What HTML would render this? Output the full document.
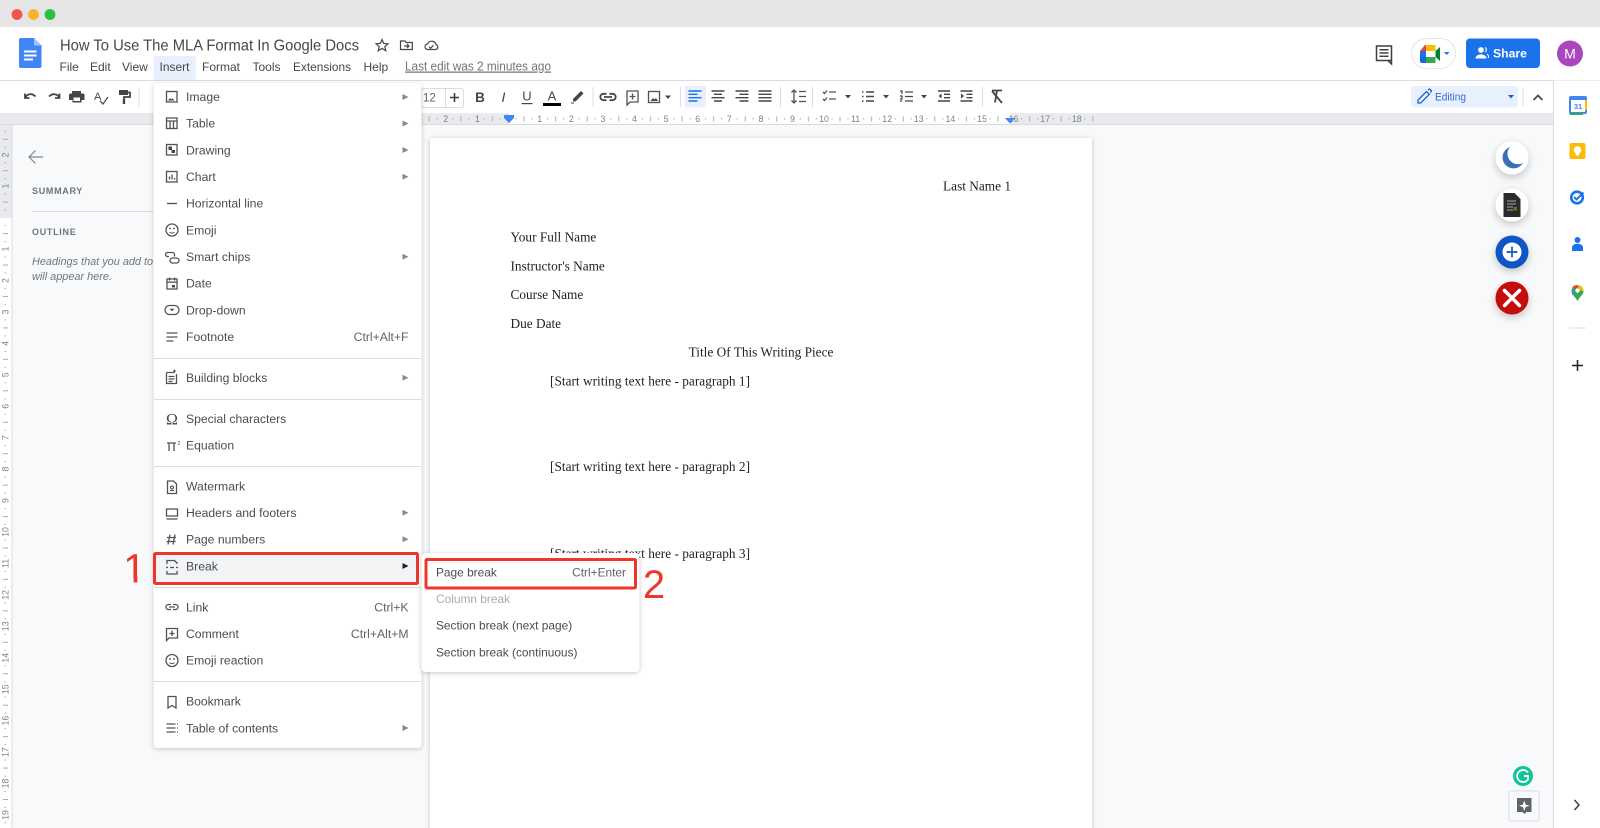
<!DOCTYPE html>
<html lang="en"><head><meta charset="utf-8"><title>How To Use The MLA Format In Google Docs</title>
<style>
html,body{margin:0;padding:0;width:1600px;height:828px;overflow:hidden;background:#fff}
svg{display:block;font-family:"Liberation Sans",Arial,sans-serif;filter:blur(.3px)}
.m{font-size:12.2px;fill:#4a4d50}
.mb{font-size:12px;fill:#444746}
.d{font-family:"Liberation Serif","Times New Roman",serif;font-size:13.3px;fill:#222}
.r{font-size:8.8px;fill:#7d8185}
.i{fill:none;stroke:#505356;stroke-width:1.3}
.t{fill:none;stroke:#444746;stroke-width:1.8}
.s{stroke:#dadce0;stroke-width:1}
.a{fill:#8a8a8a}
</style></head><body>
<svg width="1600" height="828" viewBox="0 0 1600 828" xmlns="http://www.w3.org/2000/svg">
<defs>
<filter id="sh" x="-10%" y="-10%" width="120%" height="120%"><feDropShadow dx="0" dy="1" stdDeviation="2.5" flood-color="#000" flood-opacity=".22"/></filter>
<filter id="sc" x="-40%" y="-40%" width="180%" height="180%"><feDropShadow dx="0" dy="3" stdDeviation="4" flood-color="#000" flood-opacity=".22"/></filter>
<pattern id="hr" x="508" y="113" width="31.6" height="11" patternUnits="userSpaceOnUse">
<rect x="7.5" y="5" width="1" height="1.5" fill="#a8adb2"/><rect x="15.5" y="3.500" width="1" height="5" fill="#a8adb2"/><rect x="23.5" y="5" width="1" height="1.5" fill="#a8adb2"/>
</pattern>
<pattern id="vr" x="0" y="217.6" width="11" height="31.44" patternUnits="userSpaceOnUse">
<rect x="4.5" y="7.5" width="1.5" height="1" fill="#a8adb2"/><rect x="3" y="15.5" width="5" height="1" fill="#a8adb2"/><rect x="4.5" y="23.5" width="1.5" height="1" fill="#a8adb2"/>
</pattern>
<clipPath id="one"><rect x="110" y="540" width="40" height="38"/></clipPath>
</defs>

<!-- window -->
<rect width="1600" height="828" fill="#f8f9fa"/>
<rect width="1600" height="27" fill="#e5e5e5"/>
<circle cx="17" cy="14.5" r="5.4" fill="#f2544d"/><circle cx="33.5" cy="14.5" r="5.4" fill="#fbb32d"/><circle cx="50" cy="14.5" r="5.4" fill="#27c23f"/>
<rect y="27" width="1600" height="86" fill="#fff"/>
<rect y="80" width="1600" height="1" fill="#dadce0"/>

<!-- docs logo -->
<path d="M21 38h13l7.500 7.500V66a2 2 0 0 1-2 2H21a2 2 0 0 1-2-2V40a2 2 0 0 1 2-2z" fill="#4285f4"/>
<path d="M34 38v7.500h7.500z" fill="#a1c2fa"/>
<path d="M24 51.500h12.500M24 55.500h12.500M24 59.500h9" stroke="#fff" stroke-width="1.900" fill="none"/>

<!-- title -->
<text x="60" y="50.500" font-size="15.900" fill="#45484b" textLength="299" lengthAdjust="spacingAndGlyphs">How To Use The MLA Format In Google Docs</text>
<path d="M382 39.500l1.700 3.900 4.300.4-3.200 2.800 1 4.200-3.800-2.300-3.800 2.300 1-4.200-3.200-2.800 4.300-.4z" fill="none" stroke="#444746" stroke-width="1.200"/>
<path d="M400.500 41h4.500l1.300 1.500h6v7h-11.800z M404 46h5M407 44l2 2-2 2" fill="none" stroke="#444746" stroke-width="1.200"/>
<path d="M428 49.500a2.800 2.800 0 0 1-.4-5.600 4.500 4.500 0 0 1 8.500.8 2.500 2.500 0 0 1-.2 4.800z M429 46.800l1.500 1.500 3-3" fill="none" stroke="#444746" stroke-width="1.200"/>

<!-- menu bar -->
<rect x="153.500" y="56" width="42.500" height="24" rx="3" fill="#e8f0fe"/>
<text class="mb" x="59.500" y="71">File</text>
<text class="mb" x="90" y="71">Edit</text>
<text class="mb" x="122" y="71">View</text>
<text class="mb" x="159.500" y="71">Insert</text>
<text class="mb" x="202" y="71">Format</text>
<text class="mb" x="252.500" y="71">Tools</text>
<text class="mb" x="293" y="71" textLength="58" lengthAdjust="spacingAndGlyphs">Extensions</text>
<text class="mb" x="363.500" y="71">Help</text>
<text x="405" y="70.500" font-size="12.500" fill="#70757a" text-decoration="underline" textLength="146" lengthAdjust="spacingAndGlyphs">Last edit was 2 minutes ago</text>

<!-- top right -->
<path d="M1376.500 46h15v14.500h-15z M1388 60.500l3.500 3.500v-3.500 M1379.500 49.800h9M1379.500 53h9M1379.500 56.300h9" fill="none" stroke="#3c4043" stroke-width="1.500"/>
<rect x="1411.500" y="38.500" width="44" height="30" rx="15" fill="#fff" stroke="#e3e5e8"/>
<path d="M1420 51h6v-6h-1z" fill="#ea4335"/><path d="M1426 45h9.500v6h-9.500z" fill="#fbbc04"/><path d="M1420 51h6v6h-6z" fill="#1a73e8"/>
<path d="M1420 57h6v6h-4a2 2 0 0 1-2-2z" fill="#1967d2"/><path d="M1426 57h9.500v6h-9.500z" fill="#34a853"/><path d="M1435.500 51v6l4.500 4V47z" fill="#00832d"/>
<path d="M1426 51h6v6h-6z" fill="#fff"/>
<path d="M1444 52h5.500l-2.750 3z" fill="#1a73e8"/>
<rect x="1466" y="38.500" width="74" height="29.500" rx="4" fill="#1a73e8"/>
<circle cx="1481" cy="50" r="2.900" fill="#fff"/><path d="M1475.500 58.500c0-5.500 11-5.500 11 0z" fill="#fff"/><path d="M1485 47.500a2.500 2.500 0 0 1 0 4.500M1487 54c1 .5 1.500 1.500 1.500 4" stroke="#fff" fill="none" stroke-width="1"/>
<text x="1493" y="57.500" font-size="12.200" font-weight="bold" fill="#fff">Share</text>
<circle cx="1570" cy="53.500" r="13" fill="#ab47bc"/>
<text x="1570" y="58.500" font-size="14" fill="#fff" text-anchor="middle">M</text>

<!-- toolbar icons -->
<path class="t" d="M25 98c2-4.500 7-5 10.500-1.500M25 93.500v4.500h4.500"/>
<path class="t" d="M59.500 98c-2-4.500-7-5-10.500-1.500M59.500 93.500v4.500H55"/>
<path d="M72 91h9v2.500h2a1.500 1.500 0 0 1 1.500 1.500v5H81.500v2.500h-9V100H69v-5a1.500 1.500 0 0 1 1.500-1.500H72z" fill="#444746"/><rect x="73.500" y="97.500" width="6.500" height="3.500" fill="#fff"/>
<text x="94" y="100" font-size="11" fill="#444746">A</text><path class="i" d="M100 101l3 3 5-7"/>
<path d="M119 90h9v5h-9z" fill="#444746"/><path class="t" d="M128 92.500h2v4.500h-6v5"/><rect x="122.800" y="99" width="2.400" height="5" fill="#444746"/>
<rect x="138.500" y="87" width="1" height="20" fill="#dadce0"/>

<rect x="421.500" y="88.500" width="42" height="19" rx="2" fill="#fff" stroke="#dadce0"/><rect x="445" y="88" width="1" height="20" fill="#dadce0"/>
<text x="423" y="101.500" font-size="11.500" fill="#5f6368">12</text>
<path d="M450 97.500h9M454.500 93v9" stroke="#3c4043" stroke-width="1.600"/>
<text x="480" y="102" font-size="13.500" font-weight="bold" fill="#444746" text-anchor="middle">B</text>
<text x="503.500" y="102" font-size="14" font-style="italic" fill="#444746" text-anchor="middle">I</text>
<text x="527" y="100.500" font-size="13" fill="#444746" text-anchor="middle">U</text><rect x="521.500" y="103" width="11" height="1.200" fill="#444746"/>
<text x="552" y="100.500" font-size="13" fill="#444746" text-anchor="middle">A</text><rect x="543" y="103" width="18" height="3" fill="#000"/>
<path d="M573 99l8-8 2.500 2.500-8 8H573z" fill="#444746"/><path d="M571 103h3" stroke="#444746"/>
<rect x="592.500" y="87" width="1" height="20" fill="#dadce0"/>
<path class="t" d="M606.500 93.800h-3a3.200 3.200 0 0 0 0 6.400h3M609.500 93.800h3a3.200 3.200 0 0 1 0 6.400h-3M604 97h8"/>
<path class="i" d="M627 91h11v11h-8l-3 3zM632.500 93.500v6M629.500 96.500h6"/>
<rect x="648.500" y="91.500" width="11" height="11" class="i"/><path d="M650.500 101l2.500-3 1.500 1.500 1.500-1.500 2 3z" fill="#444746"/>
<path d="M665 95.500h6l-3 3.500z" fill="#444746"/>
<rect x="680" y="87" width="1" height="20" fill="#dadce0"/>
<rect x="684.500" y="86" width="21.500" height="21.500" rx="2" fill="#e8f0fe"/>
<path d="M688.500 91h13M688.500 94.300h9M688.500 97.700h13M688.500 101h9" stroke="#1a73e8" stroke-width="1.400"/>
<path d="M711.500 91h13M714 94.300h8M711.500 97.700h13M714 101h8" stroke="#444746" stroke-width="1.400"/>
<path d="M735.500 91h13M739.500 94.300h9M735.500 97.700h13M739.500 101h9" stroke="#444746" stroke-width="1.400"/>
<path d="M758.500 91h13M758.500 94.300h13M758.500 97.700h13M758.500 101h13" stroke="#444746" stroke-width="1.400"/>
<rect x="780" y="87" width="1" height="20" fill="#dadce0"/>
<path class="i" d="M794 90v13M791.500 92.500l2.500-2.500 2.500 2.500M791.500 100.500l2.500 2.500 2.500-2.500M799 91.500h7M799 96.500h7M799 101.500h7"/>
<rect x="812" y="87" width="1" height="20" fill="#dadce0"/>
<path class="i" d="M823 92l1.500 1.500 2.500-3M823 99l1.500 1.500 2.500-3M829 92h7M829 99h7"/>
<path d="M845 95h6l-3 3.500z" fill="#444746"/>
<path d="M862 92h1.500M862 96.500h1.500M862 101h1.500M866 92h8M866 96.500h8M866 101h8" stroke="#444746" stroke-width="1.500"/>
<path d="M883 95h6l-3 3.500z" fill="#444746"/>
<path d="M900 91h2v3M900 96h2v3h-2M900 101h2M905 92h8M905 96.500h8M905 101h8" stroke="#444746" stroke-width="1.200" fill="none"/>
<path d="M921 95h6l-3 3.500z" fill="#444746"/>
<path d="M938 91h12M944 94.300h6M944 97.700h6M938 101h12" stroke="#444746" stroke-width="1.400"/><path d="M941.500 93.500l-3 2.500 3 2.500z" fill="#444746"/>
<path d="M960.500 91h12M966.500 94.300h6M966.500 97.700h6M960.500 101h12" stroke="#444746" stroke-width="1.400"/><path d="M961 93.500l3 2.500-3 2.500z" fill="#444746"/>
<rect x="982" y="87" width="1" height="20" fill="#dadce0"/>
<path class="t" d="M992 90.500h10M997 90.500l-2 12M992 91l10 12"/>

<!-- editing -->
<rect x="1411" y="86" width="107" height="21.500" rx="3" fill="#e8f0fe"/>
<path d="M1418 103v-3l8.500-8.500 2.800 2.800L1420.800 103zM1428 90l1.500-1 2 2-1 1.500" fill="none" stroke="#1a5fd0" stroke-width="1.300"/>
<text x="1435" y="100.500" font-size="11" fill="#3367d6" textLength="31" lengthAdjust="spacingAndGlyphs">Editing</text>
<path d="M1508 95h6l-3 3.500z" fill="#1a5fd0"/>
<rect x="1522.500" y="87" width="1" height="19" fill="#dadce0"/>
<path d="M1533.500 100l4.500-4.500 4.500 4.500" fill="none" stroke="#444746" stroke-width="1.700"/>

<!-- right panel -->
<rect x="1553.500" y="80.500" width="46.500" height="748" fill="#fff"/>
<rect x="1553" y="81" width="1" height="747" fill="#dadce0"/>
<rect x="1570" y="97" width="16" height="16" rx="1" fill="#fff" stroke="#4285f4" stroke-width="2"/>
<path d="M1570 97h16v3h-16z" fill="#4285f4"/><path d="M1569 113h14v2h-13z" fill="#34a853"/><path d="M1585 100h2v10h-2z" fill="#fbbc04"/>
<text x="1578" y="109" font-size="7.500" font-weight="bold" fill="#4285f4" text-anchor="middle">31</text>
<rect x="1569.500" y="143" width="16" height="16" rx="2" fill="#fbbc04"/>
<circle cx="1577.500" cy="150" r="3.800" fill="#fff"/><rect x="1575.700" y="153.500" width="3.600" height="2" fill="#fff"/>
<circle cx="1577" cy="197.500" r="5.800" fill="none" stroke="#1a73e8" stroke-width="2.600"/><path d="M1574 197l2.500 2.500 7-7" fill="none" stroke="#1a73e8" stroke-width="2"/>
<circle cx="1577.500" cy="240" r="3" fill="#1a73e8"/><path d="M1572 251v-3.500c0-5 11-5 11 0v3.500z" fill="#1a73e8"/>
<path d="M1577.500 285a6 6 0 0 1 6 6c0 3.500-4 6-6 10-2-4-6-6.500-6-10a6 6 0 0 1 6-6z" fill="#34a853"/>
<path d="M1572 288a6 6 0 0 1 5.500-3v4z" fill="#ea4335"/><path d="M1577.500 285a6 6 0 0 1 6 6l-4-1z" fill="#fbbc04"/><path d="M1571.500 291l4 1-3 3.500z" fill="#4285f4"/>
<circle cx="1577.500" cy="290.500" r="2.200" fill="#fff"/>
<rect x="1569" y="327.500" width="17" height="1" fill="#dadce0"/>
<path d="M1572 365.500h11M1577.500 360v11" stroke="#202124" stroke-width="1.500"/>
<path d="M1574.500 800l4.500 5-4.500 5" fill="none" stroke="#444746" stroke-width="1.600"/>

<!-- horizontal ruler -->
<rect x="0" y="113" width="1553" height="11" fill="#e8eaed"/>
<rect x="509" y="113" width="501" height="11" fill="#fff"/>
<rect x="0" y="124" width="1553" height="1" fill="#dadce0"/>
<rect x="421" y="113" width="678" height="11" fill="url(#hr)"/>
<g class="r" text-anchor="middle">
<text x="445.700" y="122">2</text><text x="477.500" y="122">1</text>
<text x="539.700" y="122">1</text><text x="571.300" y="122">2</text><text x="602.900" y="122">3</text><text x="634.500" y="122">4</text><text x="666.100" y="122">5</text><text x="697.700" y="122">6</text><text x="729.300" y="122">7</text><text x="760.900" y="122">8</text><text x="792.500" y="122">9</text><text x="824" y="122">10</text><text x="855.600" y="122">11</text><text x="887.200" y="122">12</text><text x="918.800" y="122">13</text><text x="950.400" y="122">14</text><text x="982" y="122">15</text><text x="1013.600" y="122">16</text><text x="1045.200" y="122">17</text><text x="1076.800" y="122">18</text>
</g>
<path d="M504 115h10v3h-10zM504 118h10l-5 5z" fill="#4285f4"/>
<path d="M1005 118h10l-5 5.500z" fill="#4285f4"/>

<!-- vertical ruler -->
<rect x="0" y="125" width="11.500" height="703" fill="#fff"/>
<rect x="0" y="125" width="11.500" height="93" fill="#e8eaed"/>
<rect x="11.500" y="125" width="1" height="703" fill="#dadce0"/>
<rect x="0" y="125" width="11" height="703" fill="url(#vr)"/>
<g class="r" text-anchor="middle">
<text transform="translate(8.500 155) rotate(-90)">2</text><text transform="translate(8.500 186) rotate(-90)">1</text>
<text transform="translate(8.500 249) rotate(-90)">1</text><text transform="translate(8.500 280.500) rotate(-90)">2</text><text transform="translate(8.500 312) rotate(-90)">3</text><text transform="translate(8.500 343.400) rotate(-90)">4</text><text transform="translate(8.500 374.800) rotate(-90)">5</text><text transform="translate(8.500 406.300) rotate(-90)">6</text><text transform="translate(8.500 437.700) rotate(-90)">7</text><text transform="translate(8.500 469.100) rotate(-90)">8</text><text transform="translate(8.500 500.600) rotate(-90)">9</text><text transform="translate(8.500 532) rotate(-90)">10</text><text transform="translate(8.500 563.400) rotate(-90)">11</text><text transform="translate(8.500 594.900) rotate(-90)">12</text><text transform="translate(8.500 626.300) rotate(-90)">13</text><text transform="translate(8.500 657.800) rotate(-90)">14</text><text transform="translate(8.500 689.200) rotate(-90)">15</text><text transform="translate(8.500 720.600) rotate(-90)">16</text><text transform="translate(8.500 752.100) rotate(-90)">17</text><text transform="translate(8.500 783.500) rotate(-90)">18</text><text transform="translate(8.500 815) rotate(-90)">19</text>
</g>

<!-- sidebar -->
<path d="M29 157h14M35.500 150.500L29 157l6.500 6.500" fill="none" stroke="#80868b" stroke-width="1.200"/>
<text x="32" y="194" font-size="9" font-weight="bold" letter-spacing=".7" fill="#70757a">SUMMARY</text>
<rect x="32" y="211" width="122" height="1" fill="#dadce0"/>
<text x="32" y="235" font-size="9" font-weight="bold" letter-spacing=".7" fill="#70757a">OUTLINE</text>
<text x="32" y="265" font-size="10.900" font-style="italic" fill="#70757a">Headings that you add to</text>
<text x="32" y="280" font-size="10.900" font-style="italic" fill="#70757a">will appear here.</text>

<!-- page -->
<rect x="430" y="138" width="662" height="700" fill="#fff" filter="url(#sh)"/>
<text class="d" x="1011" y="190.500" text-anchor="end">Last Name 1</text>
<text class="d" x="510.500" y="241.500">Your Full Name</text>
<text class="d" x="510.500" y="270.500">Instructor's Name</text>
<text class="d" x="510.500" y="299">Course Name</text>
<text class="d" x="510.500" y="328">Due Date</text>
<text class="d" x="761" y="356.500" text-anchor="middle">Title Of This Writing Piece</text>
<text class="d" x="550" y="385.500" textLength="200" lengthAdjust="spacing">[Start writing text here - paragraph 1]</text>
<text class="d" x="550" y="471" textLength="200" lengthAdjust="spacing">[Start writing text here - paragraph 2]</text>
<text class="d" x="550" y="558" textLength="200" lengthAdjust="spacing">[Start writing text here - paragraph 3]</text>

<!-- floating buttons -->
<circle cx="1512" cy="158" r="16.500" fill="#fff" filter="url(#sc)"/>
<path d="M1510 147A11 11 0 1 0 1523 163A10.500 10.500 0 0 1 1510 147z" fill="#3d6fb8"/>
<circle cx="1512" cy="205" r="16.500" fill="#fff" filter="url(#sc)"/>
<path d="M1503.500 193h11l6 6v18h-17z" fill="#2b2b2b"/><path d="M1507 201h9M1507 204h9M1507 207h6M1507 210h6" stroke="#8f8f8f" stroke-width="1.200"/><rect x="1513.500" y="207" width="3.500" height="3.500" fill="#7a6a1c"/>
<circle cx="1512" cy="252" r="16.500" fill="#0b57c4" filter="url(#sc)"/>
<circle cx="1512" cy="252" r="9.500" fill="#fff"/>
<path d="M1506.500 252h11M1512 246.500v11" stroke="#0b57c4" stroke-width="1.700"/>
<circle cx="1512" cy="298" r="16.500" fill="#c5100d" filter="url(#sc)"/>
<path d="M1504.500 290.500l15 15M1519.500 290.500l-15 15" stroke="#fff" stroke-width="3.500" stroke-linecap="round"/>

<!-- grammarly + explore -->
<circle cx="1523" cy="776" r="10" fill="#15c39a"/>
<path d="M1528 772.500a6 6 0 1 0 0 7v-3.500h-4" fill="none" stroke="#fff" stroke-width="1.700"/>
<rect x="1509" y="791" width="30" height="30" rx="2" fill="#f8f9fa" stroke="#dadce0"/>
<path d="M1517 798h14.500v14h-5l-2 2-2-2h-5.500z" fill="#5f6368"/>
<path d="M1524.300 800.500l1.300 4 4 1.300-4 1.300-1.300 4-1.300-4-4-1.300 4-1.300z" fill="#fff"/>

<!-- main menu -->
<rect x="153.500" y="83" width="268" height="665" rx="4" fill="#fff" filter="url(#sh)"/>
<rect x="156" y="554" width="262" height="30" fill="#f1f3f4"/>
<g class="s"><path d="M154 358.500h267M154 399.500h267M154 466.500h267M154 587.500h267M154 681.500h267"/></g>

<g class="m">
<text x="186" y="101">Image</text>
<text x="186" y="127.600">Table</text>
<text x="186" y="154.300">Drawing</text>
<text x="186" y="181">Chart</text>
<text x="186" y="207.600">Horizontal line</text>
<text x="186" y="234.300">Emoji</text>
<text x="186" y="261">Smart chips</text>
<text x="186" y="287.600">Date</text>
<text x="186" y="314.300">Drop-down</text>
<text x="186" y="341">Footnote</text>
<text x="186" y="382">Building blocks</text>
<text x="186" y="423">Special characters</text>
<text x="186" y="449.600">Equation</text>
<text x="186" y="490.300">Watermark</text>
<text x="186" y="517">Headers and footers</text>
<text x="186" y="543.600">Page numbers</text>
<text x="186" y="570.300">Break</text>
<text x="186" y="611.300">Link</text>
<text x="186" y="638">Comment</text>
<text x="186" y="664.600">Emoji reaction</text>
<text x="186" y="705.300">Bookmark</text>
<text x="186" y="732.300">Table of contents</text>
</g>
<g class="m" text-anchor="end" style="fill:#5f6368">
<text x="408.500" y="341">Ctrl+Alt+F</text>
<text x="408.500" y="611.300">Ctrl+K</text>
<text x="408.500" y="638">Ctrl+Alt+M</text>
</g>
<g class="a">
<path d="M402.500 94l6 3-6 3zM402.500 120.500l6 3-6 3zM402.500 147l6 3-6 3zM402.500 173.700l6 3-6 3zM402.500 253.700l6 3-6 3zM402.500 374.700l6 3-6 3zM402.500 509.700l6 3-6 3zM402.500 536.300l6 3-6 3zM402.500 725l6 3-6 3z"/>
</g>
<path d="M402.500 563l6 3-6 3z" fill="#202124"/>

<!-- menu icons -->
<g class="i">
<rect x="166.500" y="91.500" width="10.500" height="10.500"/>
<rect x="166.500" y="118" width="10.500" height="10.500"/><path d="M166.500 121h10.500M170 121v7.500M173.500 121v7.500"/>
<rect x="166.500" y="144.500" width="10.500" height="10.500"/>
<rect x="166.500" y="171.500" width="10.500" height="10.500"/><path d="M169.500 179.500v-3M172 179.500v-5M174.500 179.500v-1.500"/>
<path d="M167 203.500h10"/>
<circle cx="172" cy="230" r="6"/>
<rect x="170" y="258" width="9" height="5" rx="2.500"/><path d="M169 256.500h-1.500a2 2 0 0 1 0-4h5a2 2 0 0 1 2 2v2"/>
<rect x="167" y="279" width="10" height="10"/>
<rect x="165" y="305.500" width="14" height="9" rx="4.500"/>
<path d="M166.500 333h11M166.500 337h11M166.500 341h7"/>
<path d="M166.500 372.500h8M176.500 374v9.500h-10v-11M168.500 376.500h6M168.500 379h6M168.500 381.500h4"/>
<path d="M167 443h9M169 443v8M174 443v8"/>
<path d="M167.500 481h6l3 3v9.500h-9z"/>
<rect x="166.500" y="509" width="11" height="7"/><path d="M166.500 519h11"/>
<path d="M170 534.500l-2 10M175 534.500l-2 10M167 537.500h9M166.500 541.500h9"/>
<path d="M167 564v-3.500h7.500l2.500 2.500v1M166 567.500h2M170 567.500h4M176 567.500h2M167 571v3h10v-3"/>
<path d="M171 604.500h-2.500a2.500 2.500 0 0 0 0 5H171M173 604.500h2.500a2.500 2.500 0 0 1 0 5H173M169 607h6"/>
<path d="M166.500 628.500h11v9.500h-8.500l-2.500 2.500zM172 630.500v5.500M169.500 633.500h5"/>
<circle cx="172" cy="660.500" r="6"/>
<path d="M168 696.500h8v11.500l-4-2.500-4 2.500z"/>
<path d="M166.500 724h9M166.500 728h9M166.500 732h9M177 724h1M177 728h1M177 732h1"/>
</g>
<path d="M168 100.500l2-2.500 1.500 1.500 1-1.200 2 2.200z" fill="#444746"/>
<rect x="168.500" y="146.500" width="3.500" height="3.500" fill="#444746"/><rect x="171.500" y="150" width="3.500" height="3" fill="#444746"/>
<rect x="167" y="281.500" width="10" height="1.200" fill="#444746"/><rect x="169" y="277.500" width="1.200" height="3" fill="#444746"/><rect x="174" y="277.500" width="1.200" height="3" fill="#444746"/><rect x="172" y="285" width="3" height="2.500" fill="#444746"/>
<path d="M169.500 308.800h5l-2.500 2.400z" fill="#444746"/>
<circle cx="170" cy="228.500" r=".9" fill="#444746"/><circle cx="174" cy="228.500" r=".9" fill="#444746"/><path d="M169.500 232c1.200 1.500 3.800 1.500 5 0" fill="none" stroke="#444746"/>
<circle cx="170" cy="659" r=".9" fill="#444746"/><circle cx="174" cy="659" r=".9" fill="#444746"/><path d="M169.500 662.500c1.200 1.500 3.800 1.500 5 0" fill="none" stroke="#444746"/>
<circle cx="172" cy="487.500" r="1.500" fill="none" stroke="#444746"/><path d="M170 490.500h4" stroke="#444746"/>
<text x="172" y="424.500" font-size="16" fill="#444746" text-anchor="middle" font-family="Liberation Serif, serif">Ω</text>
<text x="177.500" y="445" font-size="5" fill="#444746">2</text>
<path d="M174.500 369l.6 1.400 1.400.6-1.400.6-.6 1.400-.6-1.400-1.400-.6 1.400-.6z" fill="#444746"/>

<!-- red 1 box -->
<rect x="154.500" y="553.500" width="263" height="30" rx="1" fill="none" stroke="#f0362b" stroke-width="3"/>
<text x="134.500" y="582.500" font-size="41" fill="#f0362b" text-anchor="middle" clip-path="url(#one)">1</text>
<rect x="133.600" y="576" width="3.700" height="6.500" fill="#f0362b"/>

<!-- submenu -->
<rect x="421.500" y="553" width="218" height="119" rx="4" fill="#fff" filter="url(#sh)"/>
<g class="m" style="font-size:11.900px">
<text x="436" y="576.300">Page break</text>
<text x="436" y="603" style="fill:#a8abaf">Column break</text>
<text x="436" y="629.500">Section break (next page)</text>
<text x="436" y="656.300">Section break (continuous)</text>
</g>
<text x="626" y="576.300" font-size="11.900" fill="#5f6368" text-anchor="end">Ctrl+Enter</text>
<rect x="426" y="559.500" width="209.500" height="28.500" rx="1" fill="none" stroke="#f0362b" stroke-width="3"/>
<text x="654" y="598" font-size="40" fill="#f0362b" text-anchor="middle">2</text>
</svg>
</body></html>
